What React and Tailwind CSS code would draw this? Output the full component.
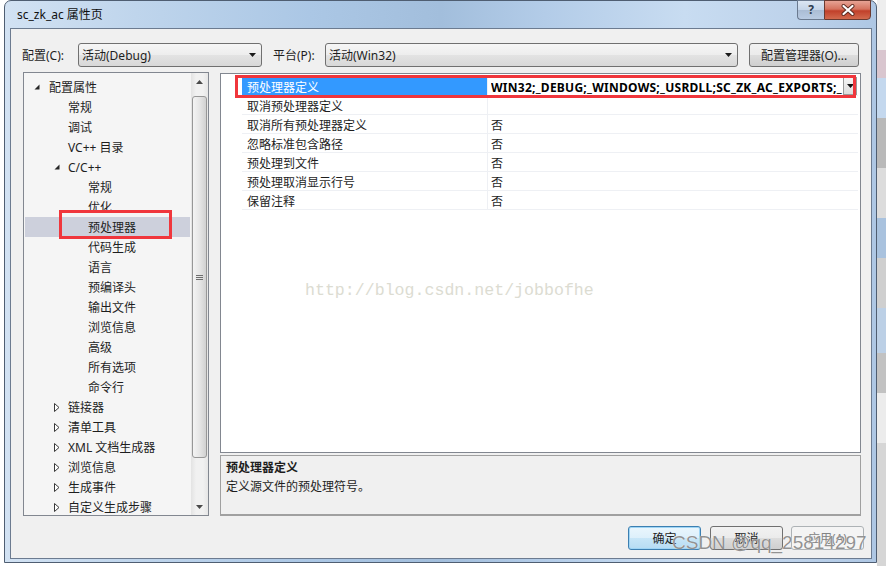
import React from 'react';

const tree = [
  { t: '配置属性', lvl: 0, exp: 'open' },
  { t: '常规', lvl: 1 },
  { t: '调试', lvl: 1 },
  { t: 'VC++ 目录', lvl: 1 },
  { t: 'C/C++', lvl: 1, exp: 'open' },
  { t: '常规', lvl: 2 },
  { t: '优化', lvl: 2 },
  { t: '预处理器', lvl: 2, sel: true },
  { t: '代码生成', lvl: 2 },
  { t: '语言', lvl: 2 },
  { t: '预编译头', lvl: 2 },
  { t: '输出文件', lvl: 2 },
  { t: '浏览信息', lvl: 2 },
  { t: '高级', lvl: 2 },
  { t: '所有选项', lvl: 2 },
  { t: '命令行', lvl: 2 },
  { t: '链接器', lvl: 1, exp: 'closed' },
  { t: '清单工具', lvl: 1, exp: 'closed' },
  { t: 'XML 文档生成器', lvl: 1, exp: 'closed' },
  { t: '浏览信息', lvl: 1, exp: 'closed' },
  { t: '生成事件', lvl: 1, exp: 'closed' },
  { t: '自定义生成步骤', lvl: 1, exp: 'closed' },
];

const spacer = { 0: 'w-[9px]', 1: 'w-[29px]', 2: 'w-[49px]' };
const triBox = { 0: 'w-[15px]', 1: 'w-[14px]', 2: 'w-[14px]' };

const props = [
  { n: '预处理器定义', v: 'WIN32;_DEBUG;_WINDOWS;_USRDLL;SC_ZK_AC_EXPORTS;_', sel: true },
  { n: '取消预处理器定义', v: '' },
  { n: '取消所有预处理器定义', v: '否' },
  { n: '忽略标准包含路径', v: '否' },
  { n: '预处理到文件', v: '否' },
  { n: '预处理取消显示行号', v: '否' },
  { n: '保留注释', v: '否' },
];

function ExpandedTri() {
  return (
    <svg width="6" height="6" viewBox="0 0 6 6">
      <path d="M5.5 0.5 L5.5 5.5 L0.5 5.5 Z" fill="#262626" />
    </svg>
  );
}

function CollapsedTri() {
  return (
    <svg width="6" height="9" viewBox="0 0 6 9">
      <path d="M0.5 0.5 L5 4.5 L0.5 8.5 Z" fill="#ffffff" stroke="#3a3a3a" strokeWidth="1" />
    </svg>
  );
}

function DownArrow({ color = '#1a1a1a' }) {
  return (
    <svg width="7" height="4" viewBox="0 0 7 4">
      <path d="M0 0 L7 0 L3.5 4 Z" fill={color} />
    </svg>
  );
}

function UpArrow({ color = '#4a4a4a' }) {
  return (
    <svg width="7" height="4" viewBox="0 0 7 4">
      <path d="M0 4 L7 4 L3.5 0 Z" fill={color} />
    </svg>
  );
}

function Combo({ w, text }) {
  return (
    <div
      className={`${w} h-[24px] shrink-0 flex items-center justify-between pl-[3px] pr-[5px] border border-[#707070] rounded-[3px] bg-[linear-gradient(180deg,#f6f6f6_0%,#ededed_50%,#e3e3e3_50%,#d8d8d8_100%)]`}
    >
      <span className="pt-[2px]">{text}</span>
      <DownArrow />
    </div>
  );
}

export default function App() {
  return (
    <div className="relative w-[886px] h-[566px] bg-white flex overflow-hidden font-['Noto_Sans','Noto_Sans_CJK_SC',sans-serif] text-[12px] text-[#1e1e1e] leading-none">
      <div className="w-[4px] shrink-0" />
      {/* window */}
      <div className="relative w-[873px] h-[563px] shrink-0 flex flex-col pl-[5px] pr-[4px] pb-[3px] rounded-t-[7px] border border-[#4f5e72] bg-[linear-gradient(90deg,#d2e2f3_0%,#bfd5ec_15%,#abc7e5_35%,#a2bedc_50%,#b3cce8_62%,#c8dcf1_78%,#bed3eb_90%,#aec7e4_100%)]">
        <div className="h-[27px] shrink-0 flex items-center pl-[7px] text-[12px] text-[#101010]">
          sc_zk_ac 属性页
        </div>
        {/* caption buttons */}
        <div className="absolute top-[-1px] right-[5px] flex h-[20px]">
          <div className="w-[27px] h-[20px] border border-[#6b7a8f] border-r-0 rounded-bl-[4px] bg-[linear-gradient(180deg,#dbe6f3_0%,#c4d4e8_50%,#aabcd4_50%,#b9cbe2_100%)] flex items-center justify-center text-[12px] font-bold text-[#2d3b4d]">
            ?
          </div>
          <div className="w-[47px] h-[20px] border border-[#6b3a30] rounded-br-[4px] bg-[linear-gradient(180deg,#e7a394_0%,#d5735f_45%,#c1402a_55%,#d26a4e_100%)] flex items-center justify-center">
            <svg width="14" height="12" viewBox="0 0 14 12">
              <path d="M2.5 2 L11.5 10 M11.5 2 L2.5 10" stroke="#5a2a20" strokeWidth="4" strokeLinecap="round" />
              <path d="M2.5 2 L11.5 10 M11.5 2 L2.5 10" stroke="#ffffff" strokeWidth="2.2" strokeLinecap="round" />
            </svg>
          </div>
        </div>

        {/* client area */}
        <div className="flex-1 flex flex-col border border-[#6c7b90] bg-[#f0f0f0]">
          {/* top row */}
          <div className="flex items-center h-[24px] mt-[14px] pl-[11px]">
            <span className="w-[56px] shrink-0 pt-[2px]">配置(C):</span>
            <Combo w="w-[184px]" text="活动(Debug)" />
            <span className="w-[52px] shrink-0 ml-[11px] pt-[2px]">平台(P):</span>
            <Combo w="w-[413px]" text="活动(Win32)" />
            <div className="ml-[11px] w-[110px] h-[24px] shrink-0 flex items-center justify-center pt-[2px] border border-[#707070] rounded-[3px] bg-[linear-gradient(180deg,#f2f2f2_0%,#ebebeb_50%,#dddddd_50%,#cfcfcf_100%)]">
              配置管理器(O)...
            </div>
          </div>

          {/* main */}
          <div className="flex mt-[5px] pl-[12px]">
            {/* tree */}
            <div className="w-[186px] h-[444px] shrink-0 flex border border-[#828790] bg-[#f5f5f5]">
              <div className="flex-1 flex flex-col pt-[4px] overflow-hidden">
                {tree.map((it, i) => (
                  <div
                    key={i}
                    className={`relative h-[20px] shrink-0 mx-[1px] flex items-center pt-[2px] ${it.sel ? 'bg-[#cdd0dc]' : ''}`}
                  >
                    <div className={`${spacer[it.lvl]} shrink-0`} />
                    <div className={`${triBox[it.lvl]} shrink-0 flex items-center mt-[-2px]`}>
                      {it.exp === 'open' && <ExpandedTri />}
                      {it.exp === 'closed' && <CollapsedTri />}
                    </div>
                    <span className="whitespace-nowrap">{it.t}</span>
                    {it.sel && (
                      <div className="absolute left-[34px] top-[-7px] w-[113px] h-[29px] border-[3px] border-[#f0363c]" />
                    )}
                  </div>
                ))}
              </div>
              {/* scrollbar */}
              <div className="w-[17px] shrink-0 flex flex-col items-center bg-[linear-gradient(90deg,#e3e3e3_0%,#f1f1f1_30%,#f1f1f1_70%,#e6e6e6_100%)]">
                <div className="h-[17px] w-full flex items-center justify-center shrink-0">
                  <UpArrow />
                </div>
                <div className="mt-[6px] w-[15px] h-[362px] flex items-center justify-center border border-[#979797] rounded-[3px] bg-[linear-gradient(90deg,#f4f4f4_0%,#e6e6e6_50%,#d1d1d1_100%)]">
                  <div className="flex flex-col gap-[1px]">
                    <div className="w-[7px] h-[1px] bg-[#6e6e6e]" />
                    <div className="w-[7px] h-[1px] bg-[#6e6e6e]" />
                    <div className="w-[7px] h-[1px] bg-[#6e6e6e]" />
                  </div>
                </div>
                <div className="flex-1" />
                <div className="h-[17px] w-full flex items-center justify-center shrink-0">
                  <DownArrow color="#4a4a4a" />
                </div>
              </div>
            </div>

            {/* right column */}
            <div className="ml-[11px] w-[641px] shrink-0 flex flex-col">
              <div className="relative mt-[1px] h-[380px] shrink-0 border border-[#828790] bg-white">
                <div className="flex flex-col pt-[3px] pl-[21px] pr-[2px]">
                  {props.map((p, i) => (
                    <div key={i} className="flex h-[19px] shrink-0 border-b border-[#eef0f4]">
                      <div
                        className={`w-[245px] shrink-0 flex items-center pl-[5px] pt-[3px] whitespace-nowrap ${p.sel ? 'bg-[#3399ff] text-white' : ''}`}
                      >
                        {p.n}
                      </div>
                      <div className="flex-1 min-w-0 flex items-center pl-[3px] border-l border-[#eef0f4]">
                        {p.sel ? (
                          <span className="flex-1 min-w-0 pt-[3px] overflow-hidden whitespace-nowrap font-bold text-black leading-[16px] tracking-[0.25px]">
                            {p.v}
                          </span>
                        ) : (
                          <span className="pt-[3px] whitespace-nowrap">{p.v}</span>
                        )}
                        {p.sel && (
                          <div className="w-[14px] h-[18px] shrink-0 mr-[1px] flex items-center justify-center border border-[#9a9a9a] bg-[linear-gradient(180deg,#f4f4f4,#dcdcdc)]">
                            <DownArrow color="#111" />
                          </div>
                        )}
                      </div>
                    </div>
                  ))}
                </div>
                <div className="absolute left-[14px] top-[1px] w-[621px] h-[23px] border-[3px] border-[#f0363c]" />
                <div className="absolute left-[84px] top-[209px] font-['Liberation_Mono',monospace] text-[16.6px] text-[#dcdcd2] whitespace-nowrap">
                  http://blog.csdn.net/jobbofhe
                </div>
              </div>
              <div className="mt-[2px] h-[61px] shrink-0 border border-[#a0a0a0] border-b-2 bg-[#f0f0f0] flex flex-col pl-[5px] pt-[2px]">
                <span className="font-bold h-[19px] flex items-center">预处理器定义</span>
                <span className="h-[19px] flex items-center">定义源文件的预处理符号。</span>
              </div>
            </div>
          </div>

          {/* buttons */}
          <div className="flex justify-end mt-[10px] pr-[7px]">
            <div className="w-[73px] h-[24px] flex items-center justify-center pt-[2px] border border-[#3c7fb1] rounded-[3px] shadow-[inset_0_0_0_1px_#9fd5f5] bg-[linear-gradient(180deg,#eaf6fd_0%,#ddf0fb_50%,#c8e6f8_50%,#b6dcf3_100%)]">
              确定
            </div>
            <div className="ml-[9px] w-[73px] h-[24px] flex items-center justify-center pt-[2px] border border-[#707070] rounded-[3px] bg-[linear-gradient(180deg,#f2f2f2_0%,#ebebeb_50%,#dddddd_50%,#cfcfcf_100%)]">
              取消
            </div>
            <div className="ml-[8px] w-[73px] h-[24px] flex items-center justify-center pt-[2px] border border-[#adb2b5] rounded-[3px] bg-[#f4f4f4] text-[#838383]">
              应用(A)
            </div>
          </div>
        </div>
      </div>

      {/* desktop strip */}
      <div className="w-[9px] shrink-0 flex flex-col">
        <div className="h-[50px] bg-[#eeeeee]" />
        <div className="h-[28px] bg-[#d9c6cf]" />
        <div className="h-[40px] bg-[#c4d8ee]" />
        <div className="h-[50px] bg-[#b9b9b9]" />
        <div className="h-[50px] bg-[#dcdcdc]" />
        <div className="h-[40px] bg-[#a9c2de]" />
        <div className="h-[50px] bg-[#cfcfcf]" />
        <div className="h-[45px] bg-[#bcd0e6]" />
        <div className="h-[40px] bg-[#c2c2c2]" />
        <div className="h-[50px] bg-[#ececec]" />
        <div className="flex-1 bg-[#d6d6d6]" />
      </div>

      {/* watermark */}
      <div className="absolute left-[672px] top-[532px] font-['Liberation_Sans',sans-serif] text-[19px] leading-[22px] text-[#7f7f7f]/85 whitespace-nowrap [text-shadow:0_0_1px_#ffffff]">
        CSDN @qq_25814297
      </div>
    </div>
  );
}
